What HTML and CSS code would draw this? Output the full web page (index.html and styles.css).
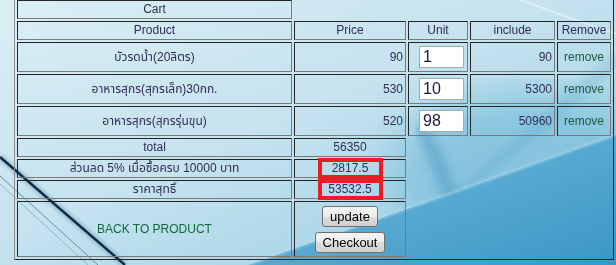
FILE: index.html
```html
<!DOCTYPE html>
<html>
<head>
<meta charset="utf-8">
<title>Cart</title>
<link rel="stylesheet" href="styles.css">
</head>
<body>
<svg class="wallpaper" viewBox="0 0 616 265" preserveAspectRatio="none" aria-hidden="true">
  <defs>
    <linearGradient id="bg" x1="0" y1="0" x2="1" y2="1">
      <stop offset="0" stop-color="#dbeef5"/>
      <stop offset="0.45" stop-color="#c6e3ef"/>
      <stop offset="1" stop-color="#93cbe2"/>
    </linearGradient>
    <linearGradient id="deep" x1="0" y1="0" x2="1" y2="1">
      <stop offset="0" stop-color="#74bcdc"/>
      <stop offset="1" stop-color="#3b97c6"/>
    </linearGradient>
    <filter id="soft"><feGaussianBlur stdDeviation="20"/></filter>
    <filter id="blur4"><feGaussianBlur stdDeviation="5"/></filter>
    <filter id="blur1"><feGaussianBlur stdDeviation="1"/></filter>
  </defs>
  <rect width="616" height="265" fill="url(#bg)"/>
  <ellipse cx="530" cy="175" rx="140" ry="80" fill="#7fc0dd" opacity="0.8" filter="url(#soft)"/>
  <path d="M420 125 C 445 170, 458 215, 466 265" stroke="#3a8cb7" stroke-width="14" fill="none" opacity="0.4" filter="url(#blur4)"/>
  <path d="M616 60 C 560 110, 500 160, 450 200" stroke="#4b9bc3" stroke-width="10" fill="none" opacity="0.25" filter="url(#blur4)"/>
  <polygon points="248,265 616,135 616,265" fill="url(#deep)"/>
  <line x1="248" y1="265" x2="616" y2="135" stroke="#b9e0ef" stroke-width="2" opacity="0.6" filter="url(#blur1)"/>
  <line x1="0" y1="157" x2="125" y2="265" stroke="#5c8ea8" stroke-width="8" opacity="0.3" filter="url(#blur1)"/>
  <line x1="0" y1="157" x2="125" y2="265" stroke="#0d2d45" stroke-width="2.5"/>
  <line x1="0" y1="176" x2="98" y2="265" stroke="#5f93ad" stroke-width="1"/>
  <line x1="0" y1="184" x2="88" y2="265" stroke="#8db7ca" stroke-width="1"/>
  <line x1="520" y1="0" x2="616" y2="34" stroke="#eef7fa" stroke-width="1.5" opacity="0.7"/>
</svg>

<table class="cart">
  <tr>
    <td class="w-product">Cart</td>
  </tr>
  <tr>
    <td>Product</td>
    <td class="w-price">Price</td>
    <td class="w-unit">Unit</td>
    <td class="w-incl">include</td>
    <td class="w-remove">Remove</td>
  </tr>
  <tr>
    <td>บัวรดน้ำ(20ลิตร)</td>
    <td class="num">90</td>
    <td class="qty"><input class="qty-input" type="text" value="1"></td>
    <td class="num">90</td>
    <td><a class="link-remove" href="#">remove</a></td>
  </tr>
  <tr>
    <td>อาหารสุกร(สุกรเล็ก)30กก.</td>
    <td class="num">530</td>
    <td class="qty"><input class="qty-input" type="text" value="10"></td>
    <td class="num">5300</td>
    <td><a class="link-remove" href="#">remove</a></td>
  </tr>
  <tr>
    <td>อาหารสุกร(สุกรรุ่นขุน)</td>
    <td class="num">520</td>
    <td class="qty"><input class="qty-input" type="text" value="98"></td>
    <td class="num">50960</td>
    <td><a class="link-remove" href="#">remove</a></td>
  </tr>
  <tr>
    <td>total</td>
    <td>56350</td>
  </tr>
  <tr>
    <td>ส่วนลด 5% เมื่อซื้อครบ 10000 บาท</td>
    <td><span class="mark">2817.5</span></td>
  </tr>
  <tr>
    <td>ราคาสุทธิ์</td>
    <td><span class="mark">53532.5</span></td>
  </tr>
  <tr>
    <td><a class="link-back" href="#">BACK TO PRODUCT</a></td>
    <td>
      <div class="actions">
        <button class="btn" type="button">update</button>
        <button class="btn" type="button">Checkout</button>
      </div>
    </td>
  </tr>
</table>
</body>
</html>
```

FILE: styles.css
```css
html, body {
  margin: 0;
  padding: 0;
}

body {
  font-family: "Liberation Sans", Arial, "Noto Sans Thai", Tahoma, "DejaVu Sans", sans-serif;
  overflow: hidden;
}

.wallpaper {
  position: fixed;
  left: 0;
  top: 0;
  width: 100%;
  height: 100%;
  z-index: -1;
}

.cart {
  margin: -3px 0 0 14px;
  width: 600px;
  border-collapse: separate;
  border-spacing: 2px;
  border: 1px solid;
  border-color: #8c8c8c #262626 #262626 #8c8c8c;
  font-size: 12px;
  line-height: 15px;
  color: #302d58;
}

.cart td {
  box-sizing: border-box;
  border: 1px solid;
  border-color: #252525 #7a7a7a #7a7a7a #252525;
  padding: 1px;
  text-align: center;
  vertical-align: middle;
  white-space: nowrap;
}

.cart .w-product { width: 275px; }
.cart .w-price { width: 112px; }
.cart .w-unit { width: 60px; }
.cart .w-incl { width: 85px; }
.cart .w-remove { width: 54px; }

.cart td.num {
  text-align: right;
  padding-right: 2px;
}

.cart td.qty {
  text-align: left;
  padding-left: 10px;
}

.qty-input {
  display: block;
  box-sizing: border-box;
  width: 45px;
  height: 22px;
  margin: 2px 0;
  padding: 1px 3px;
  border: 1px solid #a9a9a9;
  background: #fff;
  font-family: "Liberation Sans", Arial, sans-serif;
  font-size: 16px;
  line-height: 18px;
  color: #1b1840;
}

.link-remove {
  color: #1d5a3e;
  text-decoration: none;
}

.link-back {
  color: #0f6a3a;
  text-decoration: none;
}

.mark {
  display: inline-block;
  width: 57px;
  line-height: 13px;
  outline: 4px solid #ed1c24;
  vertical-align: middle;
}

.actions {
  display: flex;
  flex-direction: column;
  align-items: center;
  gap: 5px;
  padding: 3px 0 2px;
}

.btn {
  box-sizing: border-box;
  height: 21px;
  margin: 0;
  padding: 0 7px;
  border: 1px solid #707070;
  border-radius: 3px;
  background: linear-gradient(#f4f4f4, #ececec 50%, #dedede 50%, #d0d0d0);
  font-family: "Liberation Sans", Arial, sans-serif;
  font-size: 13px;
  line-height: 19px;
  color: #000;
}
```
